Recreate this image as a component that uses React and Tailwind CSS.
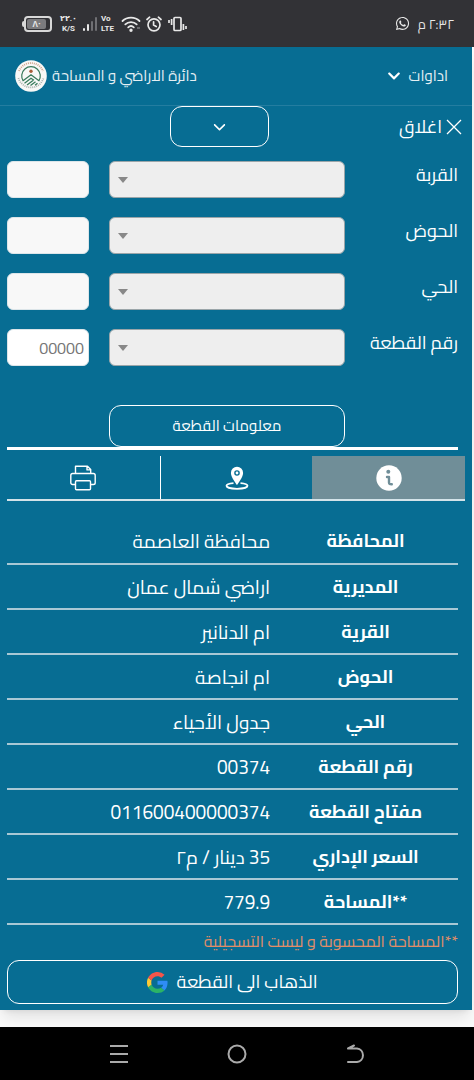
import React from 'react';
import { FaChevronDown, FaWhatsapp } from 'react-icons/fa';
import { FaChevronDown as ThinChevronDown } from 'react-icons/fa6';

const fields = [
    { id: 'village', label: 'القربة' },
    { id: 'basin', label: 'الحوض' },
    { id: 'district', label: 'الحي' },
    { id: 'parcel', label: 'رقم القطعة', placeholder: '00000' }
];

const details = [
    { label: 'المحافظة', value: 'محافظة العاصمة' },
    { label: 'المديرية', value: 'اراضي شمال عمان' },
    { label: 'القرية', value: 'ام الدنانير' },
    { label: 'الحوض', value: 'ام انجاصة' },
    { label: 'الحي', value: 'جدول الأحياء' },
    { label: 'رقم القطعة', value: '00374' },
    { label: 'مفتاح القطعة', value: '011600400000374' },
    { label: 'السعر الإداري', value: '35 دينار / م٢' },
    { label: '**المساحة', value: '779.9' }
];

const StatusBar = () => (
    <div dir="ltr" className="flex h-[47px] items-center justify-between bg-[#323236] pl-[22px] pr-5 text-[#e8e8e8]">
        <div className="flex items-center">
            {/* Battery */}
            <div className="flex items-center">
                <span className="h-[6px] w-[2px] rounded-l bg-[#d8d8d8]" />
                <span className="flex h-4 w-7 items-center rounded-[4px] border-2 border-[#d8d8d8] bg-[#323236] p-px">
                    <span className="flex h-full w-[19px] items-center justify-center rounded-[2px] bg-[#7b7b7e] text-[9px] leading-none font-bold">٨٠</span>
                </span>
            </div>
            <div className="ml-[9px] flex w-[15px] flex-col items-center font-['Roboto','DejaVu_Sans',sans-serif] text-[8px] leading-[10px] font-bold">
                <span>٢٢.٠</span>
                <span>K/S</span>
            </div>
            <svg className="ml-[6px] h-4 w-4" viewBox="0 0 16 16" aria-hidden="true">
                <rect x="1" y="12" width="2" height="3" rx="1" fill="#e8e8e8" />
                <rect x="5" y="8" width="2" height="7" rx="1" fill="#e8e8e8" />
                <rect x="9" y="5" width="2" height="10" rx="1" fill="#707074" />
                <rect x="13" y="1" width="2" height="14" rx="1" fill="#707074" />
            </svg>
            <div className="ml-[3px] flex w-[15px] flex-col font-['Roboto',sans-serif] text-[8px] leading-[10px] font-bold">
                <span>Vo</span>
                <span>LTE</span>
            </div>
            <svg className="ml-[5px] h-[18px] w-5" viewBox="0 0 20 18" fill="none" stroke="#e8e8e8" strokeWidth="1.8" strokeLinecap="round" aria-hidden="true">
                <path d="M1.5 6c4.5-4.6 12.5-4.6 17 0" />
                <path d="M4.3 9.3c3-3 8.4-3 11.4 0" />
                <path d="M7.2 12.3c1.6-1.5 4-1.5 5.6 0" />
                <circle cx="10" cy="15.3" r=".8" fill="#e8e8e8" />
                <circle cx="17.5" cy="13" r=".2" />
            </svg>
            <svg className="ml-[5px] h-4 w-4" viewBox="0 0 16 16" fill="none" stroke="#e8e8e8" strokeWidth="1.7" strokeLinecap="round" aria-hidden="true">
                <circle cx="8" cy="8.8" r="6" />
                <path d="M1 3.5 3.6 1.2M15 3.5l-2.6-2.3M7.6 5.8v3.3l2.6 1.4" />
            </svg>
            <svg className="ml-[6px] h-4 w-[19px]" viewBox="0 0 19 16" fill="none" stroke="#e8e8e8" strokeWidth="1.7" aria-hidden="true">
                <rect x="6" y="1.5" width="7" height="13" rx="1" />
                <path d="M1 4v3M3.6 3v6M15.4 8v6M18 10v3" />
            </svg>
        </div>
        <div className="flex items-center gap-2">
            <FaWhatsapp className="h-[15px] w-[15px]" />
            <span dir="rtl" className="text-[13px] leading-4">٢:٣٢ م</span>
        </div>
    </div>
);

const Logo = () => (
    <svg className="h-8 w-8" viewBox="0 0 32 32" fill="none" aria-hidden="true">
        <circle cx="16" cy="16" r="15.8" fill="#f8f8f6" />
        <path d="M4 11a13 13 0 0 1 24 0" stroke="#cfa48c" strokeWidth="1.8" strokeDasharray="1 1" />
        <path d="M3.5 18a13 13 0 0 0 25 0" stroke="#a9b0ac" strokeWidth="1.8" strokeDasharray="1 1" />
        <path d="M8.3 21.2a9.3 9.3 0 1 1 15.4 0" stroke="#397a5b" strokeWidth="1.2" />
        <circle cx="16" cy="11.2" r="1.7" fill="#a75d39" />
        <path d="m8 20.7 8-6 8 6M9.5 23.2l6.5-5 3 2M12 25l6-4.5M15.5 25.5l5-3.7M20 25.2l2.5-2" stroke="#397a5b" strokeWidth="1.3" />
    </svg>
);

const PinIcon = () => (
    <svg className="h-6 w-6" viewBox="0 0 24 24" fill="none" aria-hidden="true">
        <path d="M8.5 17.2c-4 .3-7 1.3-7 2.6 0 1.7 4.5 3 10.5 3s10.5-1.3 10.5-3c0-1.3-3-2.3-7-2.6" stroke="#fff" strokeWidth="1.8" />
        <path fillRule="evenodd" d="M12 .8a6.1 6.1 0 0 0-6.1 6.1c0 4.3 6.1 12 6.1 12s6.1-7.7 6.1-12A6.1 6.1 0 0 0 12 .8Zm0 3.4a2.8 2.8 0 1 1 0 5.6 2.8 2.8 0 0 1 0-5.6Z" fill="#fff" />
        <circle cx="12" cy="7" r="1.4" fill="#fff" />
    </svg>
);

const PrinterIcon = () => (
    <svg className="h-[26px] w-[26px]" viewBox="0 0 26 26" fill="none" stroke="#fff" strokeWidth="1.4" strokeLinejoin="round" aria-hidden="true">
        <path d="M5.5 8.5V1.2h12l3.2 3.2v4.1M17 1.2v3.7h3.7" />
        <path d="M5.5 19.5H2.6c-1 0-1.8-.7-1.8-1.8v-7.3c0-1 .8-1.9 1.8-1.9h20.8c1 0 1.8.8 1.8 1.9v7.3c0 1-.8 1.8-1.8 1.8h-2.9" />
        <rect x="5.5" y="15.8" width="15" height="8.9" rx="1" />
    </svg>
);

const InfoIcon = () => (
    <svg className="h-[26px] w-[26px]" viewBox="0 0 26 26" aria-hidden="true">
        <circle cx="13" cy="13" r="12.7" fill="#fff" />
        <circle cx="12.3" cy="6.8" r="2" fill="#708e98" />
        <path d="M11 12h2v5.6c0 1.3.8 1.7 2.8 1.6" fill="none" stroke="#708e98" strokeWidth="2.4" strokeLinecap="round" strokeLinejoin="round" />
    </svg>
);

const GoogleLogo = () => (
    <svg className="h-[21px] w-[21px]" viewBox="0 0 48 48" aria-hidden="true">
        <path fill="#2f8df5" d="M47 24.5c0-1.6-.1-3.1-.4-4.5H24v9h12.9c-.6 3-2.3 5.5-4.8 7.2l7.7 6C44.4 38 47 31.8 47 24.5Z" />
        <path fill="#2bb366" d="M24 48c6.5 0 11.9-2.1 15.9-5.8l-7.8-6c-2.1 1.4-4.9 2.3-8.1 2.3-6.3 0-11.6-4.2-13.5-9.9l-8 6.2C6.5 42.7 14.6 48 24 48Z" />
        <path fill="#fcc934" d="M10.5 28.6a14.3 14.3 0 0 1 0-9.2l-8-6.2a24 24 0 0 0 0 21.6l8-6.2Z" />
        <path fill="#f4554a" d="M24 9.5c3.5 0 6.7 1.2 9.2 3.6l6.9-6.9A23.2 23.2 0 0 0 24 0C14.6 0 6.5 5.4 2.5 13.2l8 6.2C12.4 13.7 17.7 9.5 24 9.5Z" />
    </svg>
);

const App = () => {
    return (
        <div dir="rtl" className="flex min-h-screen flex-col bg-[#fafafa] font-['Cairo','Open_Sans','DejaVu_Sans',sans-serif] text-white">
            <StatusBar />

            <div className="mr-[2px] bg-[#076d93] shadow-lg">
                {/* Header */}
                <header className="flex h-[59px] items-center justify-between border-b border-[#247da0] pl-[15px] pr-6 text-[15px] text-[#e4eff3]">
                    <button className="flex items-center gap-2">
                        اداوات
                        <FaChevronDown className="h-[14px] w-[14px] text-white" />
                    </button>
                    <a href="#home" className="flex items-center gap-[5px]">
                        دائرة الاراضي و المساحة
                        <Logo />
                    </a>
                </header>

                <div className="grid grid-cols-[203fr_99fr_170fr] items-center">
                    <button className="flex items-center gap-1 pr-[10px] text-lg leading-6">
                        <svg className="h-4 w-4" viewBox="0 0 16 16" stroke="#fff" strokeWidth="1.3" aria-hidden="true">
                            <path d="m1 1 14 14M15 1 1 15" />
                        </svg>
                        اغلاق
                    </button>
                    <button aria-label="عرض" className="flex h-[41px] items-center justify-center rounded-xl border border-white">
                        <ThinChevronDown className="h-[13px] w-[13px]" />
                    </button>
                </div>

                {/* Search fields */}
                <form className="flex flex-col pl-[7px] pr-[14px] pt-[14px]">
                    {fields.map((field) => (
                        <div key={field.id} className="grid h-14 grid-cols-[113fr_236fr_20fr_82fr] items-start">
                            <label htmlFor={field.id} className="text-lg leading-7">{field.label}</label>
                            <div className="relative h-[37px]">
                                <select id={field.id} className="h-full w-full appearance-none rounded-md border border-[#9aa5a9] bg-[#eee]" />
                                <span className="pointer-events-none absolute left-[9px] top-4 border-x-[5px] border-t-[6px] border-x-transparent border-t-[#888]" />
                            </div>
                            <input
                                aria-label={field.label}
                                placeholder={field.placeholder}
                                className={`col-start-4 h-[37px] w-full min-w-0 rounded-md border border-[#dce5e9] px-1 text-base text-black placeholder:text-[#757575] ${field.placeholder ? 'bg-white' : 'bg-[#f8f8f8]'}`}
                            />
                        </div>
                    ))}
                </form>

                <div className="mr-[14px] ml-[7px] mt-5 grid grid-cols-[113fr_236fr_102fr] border-b-[3px] border-white">
                    <button className="col-start-2 h-[42px] rounded-xl border border-white text-[15px]">معلومات القطعة</button>
                </div>

                {/* Tabs */}
                <div className="mx-[7px] mt-[6px] grid grid-cols-3 border-b-2 border-[#d3e3e9]">
                    <button aria-label="معلومات" className="flex h-[43px] items-center justify-center bg-[#708e98]"><InfoIcon /></button>
                    <button aria-label="الموقع" className="flex h-[43px] items-center justify-center border-l border-white"><PinIcon /></button>
                    <button aria-label="طباعة" className="flex h-[43px] items-center justify-center"><PrinterIcon /></button>
                </div>

                <div className="pl-[7px] pr-[14px] pt-[18px]">
                    <table className="w-full table-fixed border-collapse">
                        <tbody>
                            {details.map((row) => (
                                <tr key={row.label} className="h-[45px] border-b-2 border-[#a8c8d5]">
                                    <th className="w-[41%] text-lg leading-6 font-bold">{row.label}</th>
                                    <td className="pr-[3px] text-[19px] leading-6">{row.value}</td>
                                </tr>
                            ))}
                        </tbody>
                    </table>
                    <p className="pt-1 text-base leading-6 text-[#e18d68]">**المساحة المحسوبة و ليست التسجيلية</p>
                    <button className="mt-[7px] flex h-11 w-full items-center justify-center gap-2 rounded-xl border border-white text-lg">
                        الذهاب الى القطعة
                        <GoogleLogo />
                    </button>
                </div>
                <div className="h-[6px]" />
            </div>

            <nav dir="ltr" className="mt-auto grid h-[53px] grid-cols-3 items-center justify-items-center bg-black px-[12.5%]">
                <button aria-label="التطبيقات">
                    <svg className="h-5 w-[18px]" viewBox="0 0 18 20" stroke="#aaa" strokeWidth="2" aria-hidden="true"><path d="M0 2h18M0 10h18M0 18h18" /></svg>
                </button>
                <button aria-label="الرئيسية">
                    <svg className="h-5 w-5" viewBox="0 0 20 20" fill="none" stroke="#aaa" strokeWidth="2" aria-hidden="true"><circle cx="10" cy="10" r="8.5" /></svg>
                </button>
                <button aria-label="رجوع">
                    <svg className="h-5 w-5" viewBox="0 0 20 20" fill="none" stroke="#aaa" strokeWidth="2" strokeLinecap="round" strokeLinejoin="round" aria-hidden="true"><path d="M8 1.5 2 4.5h9a6.8 6.8 0 0 1 0 13.5H2" /></svg>
                </button>
            </nav>
        </div>
    );
};

export default App;
